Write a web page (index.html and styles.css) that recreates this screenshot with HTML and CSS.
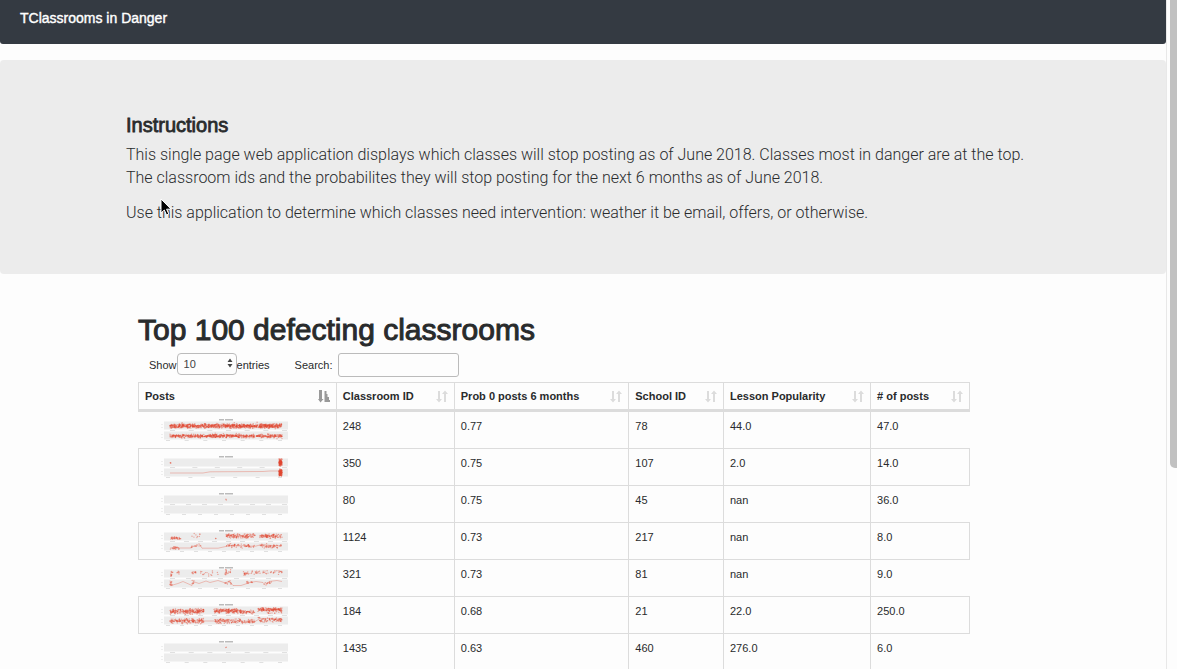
FILE: index.html
```html
<!DOCTYPE html>
<html lang="en">
<head>
<meta charset="utf-8">
<title>TClassrooms in Danger</title>
<link rel="stylesheet" href="styles.css">
</head>
<body>
<div class="page">
  <header class="navbar"><span class="brand">TClassrooms in Danger</span></header>
  <section class="jumbotron">
    <h2 class="jumbotron-title">Instructions</h2>
    <p class="lead">This single page web application displays which classes will stop posting as of June 2018. Classes most in danger are at the top. The classroom ids and the probabilites they will stop posting for the next 6 months as of June 2018.</p>
    <p class="lead">Use this application to determine which classes need intervention: weather it be email, offers, or otherwise.</p>
    <svg class="pointer" viewBox="0 0 12 18" aria-hidden="true"><path d="M1 1v14l3.3-3 2.2 5 2.3-1-2.2-4.800h4.500z" fill="#000" stroke="#fff"/></svg>
  </section>
  <main class="content">
    <h1 class="title">Top 100 defecting classrooms</h1>
    <div class="controls">
      <label class="length">Show<span class="select-box"><select class="select"><option>10</option><option>25</option><option>50</option><option>100</option></select><svg class="select-arrows" viewBox="0 0 6 10" aria-hidden="true"><path d="M0.500 4 3 0.500 5.500 4zM0.500 6 3 9.500 5.500 6z" fill="#444"/></svg></span>entries</label>
      <label class="search"><span>Search:</span><input class="search-input" type="search"></label>
    </div>
    <table class="table">
      <colgroup><col class="col-plot"><col class="col-id"><col class="col-prob"><col class="col-school"><col class="col-pop"><col class="col-posts"></colgroup>
      <thead>
        <tr>
          <th><span class="head">Posts<svg class="sort sort-active" viewBox="0 0 12 13" aria-hidden="true"><path d="M1 0h3v9h1.500L2.500 12.500 0 9h1zM6.500 1h2v3h-2zM6.500 4h3v3h-3zM6.500 7H11v3H6.500zM6.500 10H12v2H6.500z"/></svg></span></th>
          <th><span class="head">Classroom ID<svg class="sort" viewBox="0 0 12 13" aria-hidden="true"><path d="M2 1h2v8h2l-3 3.500-3-3.500h2zM8 12h2V4h2L9 .5 6 4h2z"/></svg></span></th>
          <th><span class="head">Prob 0 posts 6 months<svg class="sort" viewBox="0 0 12 13" aria-hidden="true"><path d="M2 1h2v8h2l-3 3.500-3-3.500h2zM8 12h2V4h2L9 .5 6 4h2z"/></svg></span></th>
          <th><span class="head">School ID<svg class="sort" viewBox="0 0 12 13" aria-hidden="true"><path d="M2 1h2v8h2l-3 3.500-3-3.500h2zM8 12h2V4h2L9 .5 6 4h2z"/></svg></span></th>
          <th><span class="head">Lesson Popularity<svg class="sort" viewBox="0 0 12 13" aria-hidden="true"><path d="M2 1h2v8h2l-3 3.500-3-3.500h2zM8 12h2V4h2L9 .5 6 4h2z"/></svg></span></th>
          <th><span class="head"># of posts<svg class="sort" viewBox="0 0 12 13" aria-hidden="true"><path d="M2 1h2v8h2l-3 3.500-3-3.500h2zM8 12h2V4h2L9 .5 6 4h2z"/></svg></span></th>
        </tr>
      </thead>
      <tbody>
        <tr><td><svg class="plot" viewBox="0 0 132 25"></svg></td><td>248</td><td>0.77</td><td>78</td><td>44.0</td><td>47.0</td></tr>
        <tr><td><svg class="plot" viewBox="0 0 132 25"></svg></td><td>350</td><td>0.75</td><td>107</td><td>2.0</td><td>14.0</td></tr>
        <tr><td><svg class="plot" viewBox="0 0 132 25"></svg></td><td>80</td><td>0.75</td><td>45</td><td>nan</td><td>36.0</td></tr>
        <tr><td><svg class="plot" viewBox="0 0 132 25"></svg></td><td>1124</td><td>0.73</td><td>217</td><td>nan</td><td>8.0</td></tr>
        <tr><td><svg class="plot" viewBox="0 0 132 25"></svg></td><td>321</td><td>0.73</td><td>81</td><td>nan</td><td>9.0</td></tr>
        <tr><td><svg class="plot" viewBox="0 0 132 25"></svg></td><td>184</td><td>0.68</td><td>21</td><td>22.0</td><td>250.0</td></tr>
        <tr><td><svg class="plot" viewBox="0 0 132 25"></svg></td><td>1435</td><td>0.63</td><td>460</td><td>276.0</td><td>6.0</td></tr>
      </tbody>
    </table>
  </main>
</div>
<div class="scrollbar" aria-hidden="true"><div class="thumb"></div></div>
<script src="plots.js"></script>
</body>
</html>
```
FILE: styles.css
```css
* { box-sizing: border-box; }
html, body { height: 100%; }
body {
  margin: 0;
  display: flex;
  overflow: hidden;
  background: #fdfdfd;
  color: #292b2c;
  font: 11px/18px "Liberation Sans", Arial, sans-serif;
}
h1, h2, p { margin: 0; }
.page { flex: 1; min-width: 0; }
.navbar {
  height: 44px;
  padding: 8px 20px;
  border-radius: 0 0 3px 3px;
  background: #343a42;
}
.brand {
  color: #fff;
  font-size: 14px;
  line-height: 20px;
  -webkit-text-stroke: 0.4px #fff;
}
.jumbotron {
  position: relative;
  margin: 16px 0 40px;
  padding: 54px 126px 50px;
  border-radius: 4px;
  background: #ececec;
}
.jumbotron-title {
  font-size: 20px;
  font-weight: 400;
  line-height: 22px;
  margin-bottom: 7px;
  -webkit-text-stroke: 0.8px #292b2c;
}
.lead {
  font-family: Roboto, "Liberation Sans", sans-serif;
  font-size: 16px;
  font-weight: 300;
  line-height: 23px;
  margin-bottom: 12px;
}
.lead:last-of-type { margin-bottom: 0; }
.pointer { position: absolute; left: 160px; top: 138px; width: 12px; height: 18px; }
.content { margin: 0 196px 0 138px; }
.title {
  font-size: 30px;
  font-weight: 400;
  line-height: 32px;
  margin-bottom: 7px;
  -webkit-text-stroke: 1px #292b2c;
}
.controls { display: flex; gap: 25px; padding-left: 11px; height: 29px; align-items: flex-start; }
.length, .search { display: flex; align-items: center; height: 24px; }
.search { gap: 6px; }
.select-box { position: relative; display: flex; height: 24px; }
.select {
  appearance: none;
  width: 60px;
  height: 22px;
  padding: 0 6px;
  border: 1px solid #bbb;
  border-radius: 4px;
  background: #fdfdfd;
  color: #444;
  font: inherit;
}
.select-arrows { position: absolute; right: 4px; top: 5px; width: 6px; height: 10px; }
.search-input {
  width: 121px;
  height: 24px;
  padding: 0 6px;
  border: 1px solid #bbb;
  border-radius: 3px;
  background: #fdfdfd;
  font: inherit;
}
.table { width: 100%; table-layout: fixed; border-collapse: collapse; }
.col-plot { width: 23.800%; }
.col-id { width: 14.200%; }
.col-prob { width: 21%; }
.col-school { width: 11.400%; }
.col-pop { width: 17.700%; }
.col-posts { width: 11.900%; }
th, td { padding: 6px 6px 5px; border: 1px solid #dcdcdc; text-align: left; vertical-align: top; }
th { padding-top: 4px; padding-bottom: 4px; border-bottom-width: 3px; line-height: 18px; }
td { height: 37px; line-height: 16px; }
tbody tr:nth-child(odd) td:first-child { border-left-color: transparent; }
tbody tr:nth-child(odd) td:last-child { border-right-color: transparent; }
.head { display: flex; justify-content: space-between; align-items: center; white-space: nowrap; }
.sort { width: 12px; height: 13px; fill: #dcdcdc; }
.sort-active { fill: #999; }
.plot { display: block; width: 132px; height: 25px; margin-left: 13px; }
.scrollbar { width: 11px; padding-left: 3px; border-left: 1px solid #e8e8e8; }
.thumb { height: 70%; background: #c1c1c1; border-radius: 0 0 0 5px; }
```
FILE: plots.js
```js
// Two stacked panels per classroom: a scatter on top, its trend line below.
// clouds: [x from, x to, centre y, spread, number of points]
const plots = [
  { ticks: 7, clouds: [[12, 124, 8, 2.4, 850], [12, 124, 7.5, 3.5, 70], [12, 124, 18, 2, 560], [12, 124, 18, 3, 60]] },
  { ticks: 6, clouds: [[12, 13, 7.8, 0.3, 3], [121, 124, 7.5, 4, 110], [121, 124, 17.5, 4, 110]], line: "12 18 45 18 52 16.800 105 16.500 112 16 121 16" },
  { ticks: 8, clouds: [[67.500, 68.500, 7.5, 0.8, 2]] },
  { ticks: 9, clouds: [[12, 23, 9, 1.6, 34], [33, 42, 6.5, 3, 9], [57, 58, 9.5, 0.2, 2], [68, 97, 7, 2.6, 125], [102, 124, 7, 2.6, 100], [12, 22, 19, 1.6, 20], [33, 43, 17, 2.2, 10], [68, 97, 17, 2.6, 55], [102, 124, 17, 2.6, 48]], line: "12 19 33 19 36 17 38 17.500 41 14.500 44 19.200 60 19.200 70 17 80 16.500 97 17.300 104 15.500 114 16.500 124 17" },
  { ticks: 8, clouds: [[12, 15, 7.5, 3.8, 11], [18, 22, 6.5, 1.8, 7], [34, 38, 6.5, 1.3, 12], [40, 60, 7.5, 3.3, 16], [67, 73, 6.5, 3.3, 17], [85, 92, 7.5, 2.4, 18], [92, 124, 6.5, 2.4, 42], [12, 14, 17.5, 3, 9], [34, 36, 16.5, 3, 6], [67, 74, 16.5, 2, 10], [87, 95, 16.5, 2, 10], [104, 114, 17.5, 2, 10]], line: "12 14.500 13 19.500 20 17.500 25 15.500 34 19.500 35 15.500 41 17.500 48 15 52 16.500 60 14.500 69 17.500 71 15 75 19.500 83 19.500 92 16.500 98 15.500 105 16.500 108 19.500 111 15.500 119 14.500 124 15.500" },
  { ticks: 9, clouds: [[12, 46, 8.3, 3.2, 210], [56, 82, 8, 2.8, 165], [82, 97, 9, 2.4, 60], [100, 124, 6.5, 2.2, 145], [109, 124, 9.8, 1.2, 12], [12, 46, 18, 3, 140], [56, 82, 18, 2.8, 85], [82, 97, 18.500, 2.4, 42], [100, 124, 16.800, 2.8, 75]], line: "12 17.500 46 18 56 18 80 18 97 18.500 102 15.500 124 16" },
  { ticks: 7, clouds: [[67.500, 68.500, 7.5, 0.8, 2]] }
];

let seed = 7;
function random() {
  seed = (seed * 16807) % 2147483647;
  return seed / 2147483647;
}

function box(x, y, w, h, fill) {
  return `<rect x="${x}" y="${y}" width="${w}" height="${h}" fill="${fill}"/>`;
}

document.querySelectorAll(".plot").forEach((svg, i) => {
  const { ticks, clouds, line } = plots[i];
  let art = box(6, 3.500, 124, 8, "#ececec") + box(6, 13.500, 124, 8, "#ececec");
  art += box(61, 1, 5, 1.500, "#bbb") + box(67, 1, 8, 1.500, "#bbb");
  for (let t = 0; t < ticks; t++) {
    const x = 12 + t * 112 / (ticks - 1);
    art += box(x, 12, 5, 1, "#e0e0e0") + box(x - 4, 22, 4, 1, "#e0e0e0");
  }
  for (const y of [6, 9, 16, 19]) art += box(3, y, 2, 1, "#eee");
  if (line) art += `<polyline points="${line}" fill="none" stroke="#e24a33" stroke-opacity=".45" stroke-width=".7"/>`;
  for (const [from, to, mid, spread, count] of clouds) {
    let d = "";
    for (let n = 0; n < count; n++) {
      const x = from + random() * (to - from);
      const y = mid + (random() + random() - 1) * spread;
      d += `<circle cx="${x.toFixed(1)}" cy="${y.toFixed(1)}" r=".7"/>`;
    }
    art += `<g fill="#e24a33" fill-opacity=".45">${d}</g>`;
  }
  svg.innerHTML = art;
});
```
